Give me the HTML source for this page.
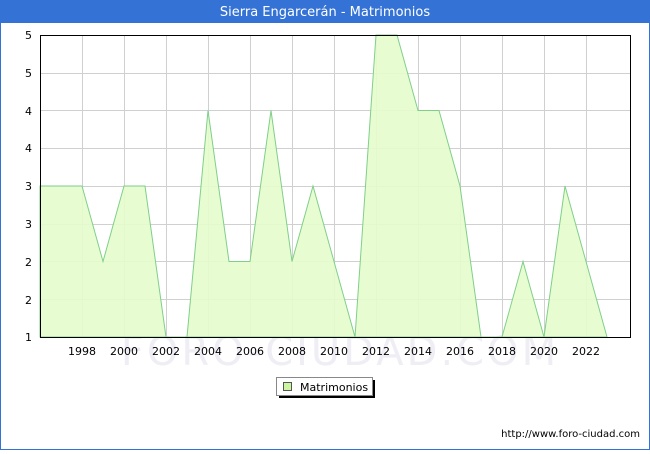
<!DOCTYPE html><html><head><style>body{margin:0;width:650px;height:450px;overflow:hidden;font-family:"DejaVu Sans",sans-serif}</style></head><body>
<svg width="650" height="450" xmlns="http://www.w3.org/2000/svg" font-family="DejaVu Sans, sans-serif">
<rect x="0" y="0" width="650" height="450" fill="#fff"/>
<rect x="0.5" y="0.5" width="649" height="449" fill="none" stroke="#3473d5"/>
<rect x="0" y="0" width="650" height="23" fill="#3473d5"/>
<text x="325" y="16" fill="#fff" font-size="13" text-anchor="middle">Sierra Engarcerán - Matrimonios</text>
<g stroke="#d0d0d0" stroke-width="1">
<line x1="40" y1="73.5" x2="630" y2="73.5"/><line x1="40" y1="110.5" x2="630" y2="110.5"/><line x1="40" y1="148.5" x2="630" y2="148.5"/><line x1="40" y1="186.5" x2="630" y2="186.5"/><line x1="40" y1="224.5" x2="630" y2="224.5"/><line x1="40" y1="261.5" x2="630" y2="261.5"/><line x1="40" y1="299.5" x2="630" y2="299.5"/>
<line x1="82.5" y1="35" x2="82.5" y2="337"/><line x1="124.5" y1="35" x2="124.5" y2="337"/><line x1="166.5" y1="35" x2="166.5" y2="337"/><line x1="208.5" y1="35" x2="208.5" y2="337"/><line x1="250.5" y1="35" x2="250.5" y2="337"/><line x1="292.5" y1="35" x2="292.5" y2="337"/><line x1="334.5" y1="35" x2="334.5" y2="337"/><line x1="376.5" y1="35" x2="376.5" y2="337"/><line x1="418.5" y1="35" x2="418.5" y2="337"/><line x1="460.5" y1="35" x2="460.5" y2="337"/><line x1="502.5" y1="35" x2="502.5" y2="337"/><line x1="544.5" y1="35" x2="544.5" y2="337"/><line x1="586.5" y1="35" x2="586.5" y2="337"/>
</g>
<text x="340" y="365" font-size="40" fill="#eeeef4" text-anchor="middle" letter-spacing="3">FORO-CIUDAD.COM</text>
<polygon fill="#e4fdcc" fill-opacity="0.9" stroke="#7fcf8a" stroke-width="1" points="40,337 40,186 61,186 82,186 103,261.5 124,186 145,186 166,337 187,337 208,110.5 229,261.5 250,261.5 271,110.5 292,261.5 313,186 334,261.5 355,337 376,35 397,35 418,110.5 439,110.5 460,186 481,337 502,337 523,261.5 544,337 565,186 586,261.5 607,337"/>
<rect x="40.5" y="35.5" width="590" height="302" fill="none" stroke="#000"/>
<g font-size="11" fill="#000" text-anchor="end">
<text x="32" y="39">5</text><text x="32" y="77">5</text><text x="32" y="115">4</text><text x="32" y="152">4</text><text x="32" y="190">3</text><text x="32" y="228">3</text><text x="32" y="266">2</text><text x="32" y="304">2</text><text x="32" y="341">1</text>
</g>
<g font-size="11" fill="#000" text-anchor="middle">
<text x="82" y="355">1998</text><text x="124" y="355">2000</text><text x="166" y="355">2002</text><text x="208" y="355">2004</text><text x="250" y="355">2006</text><text x="292" y="355">2008</text><text x="334" y="355">2010</text><text x="376" y="355">2012</text><text x="418" y="355">2014</text><text x="460" y="355">2016</text><text x="502" y="355">2018</text><text x="544" y="355">2020</text><text x="586" y="355">2022</text>
</g>
<rect x="279" y="380" width="96" height="18" fill="#000"/>
<rect x="276.5" y="377.5" width="96" height="18" fill="#fff" stroke="#888"/>
<rect x="283.5" y="382.5" width="8" height="8" fill="#ccf5a0" stroke="#555"/>
<text x="300" y="391" font-size="11">Matrimonios</text>
<text x="640" y="437" font-size="10" text-anchor="end">http://www.foro-ciudad.com</text>
</svg></body></html>
